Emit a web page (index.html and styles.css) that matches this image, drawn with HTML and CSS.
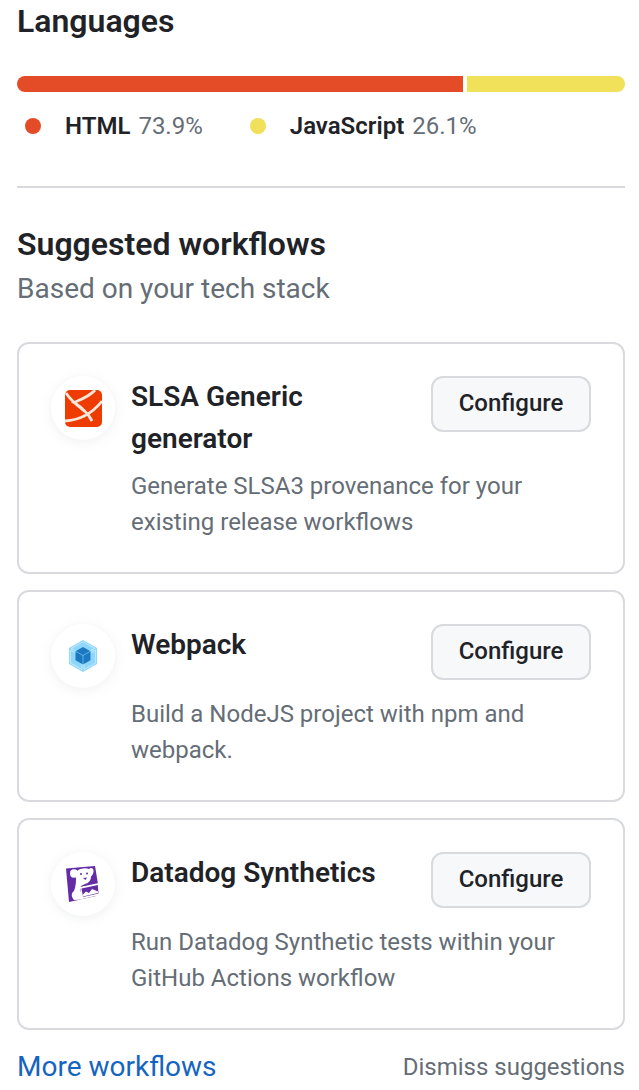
FILE: index.html
```html
<!DOCTYPE html>
<html lang="en">
<head>
<meta charset="utf-8">
<title>Languages</title>
<link rel="stylesheet" href="styles.css">
</head>
<body>
<main class="page">
  <h2 class="section-title">Languages</h2>
  <div class="lang-bar">
    <span class="lang-seg html"></span>
    <span class="lang-seg js"></span>
  </div>
  <ul class="legend">
    <li class="legend-item"><span class="dot html"></span><b class="lang-name">HTML</b><span class="lang-pct">73.9%</span></li>
    <li class="legend-item"><span class="dot js"></span><b class="lang-name">JavaScript</b><span class="lang-pct">26.1%</span></li>
  </ul>
  <hr class="divider">
  <h2 class="section-title">Suggested workflows</h2>
  <p class="subtitle">Based on your tech stack</p>

  <article class="card">
    <div class="logo">
      <svg width="37" height="37" viewBox="0 0 37 37">
        <rect width="37" height="37" rx="5" fill="#ee3c00"/>
        <path d="M1 3C6 11 13 16 20 21.500C23 24 25 27 27 31M30 0C25 6 17 9 9 12.500C13 15 16 17 20 21.500M0 31C14 30 27 24 37 11" fill="none" stroke="#fbe6da" stroke-width="2.800"/>
      </svg>
    </div>
    <div class="card-body">
      <div class="card-head">
        <h3 class="card-title">SLSA Generic generator</h3>
        <button class="btn">Configure</button>
      </div>
      <p class="card-desc">Generate SLSA3 provenance for your existing release workflows</p>
    </div>
  </article>

  <article class="card">
    <div class="logo">
      <svg width="28" height="32" viewBox="0 0 28 32">
        <path d="M14 0L28 8V24L14 32L0 24V8Z" fill="#8ed6fb"/>
        <path d="M14 1.800L25.800 8.400L14 15.200L2.200 8.400ZM1.400 10L13 16.600V29.600L1.400 23ZM26.600 10V23L15 29.600V16.600Z" fill="none" stroke="#d8f1fd" stroke-width=".7"/>
        <path d="M14 7L21.500 11.200V20.200L14 24.500L6.500 20.200V11.200Z" fill="#1c78c0"/>
        <path d="M6.500 11.200L14 15.500L21.500 11.200M14 15.500V24.500" fill="none" stroke="#8ed6fb" stroke-width=".6"/>
      </svg>
    </div>
    <div class="card-body">
      <div class="card-head">
        <h3 class="card-title">Webpack</h3>
        <button class="btn">Configure</button>
      </div>
      <p class="card-desc">Build a NodeJS project with npm and webpack.</p>
    </div>
  </article>

  <article class="card">
    <div class="logo">
      <svg width="34" height="36" viewBox="0 0 34 36">
        <path d="M0 2.500L29 0L32 18L30 30L3 36Z" fill="#632ca6"/>
        <ellipse cx="8" cy="7.500" rx="4" ry="4.200" fill="#fff"/>
        <path d="M11 5C14 2 20 1.500 23 3C25 1 27 2 27.500 4C28 7 26 10 25 10.500C25 14 23 17 19 18L15 20C14 23 14 25 15 26C17 27 18 31 16 33.500L8 34C5 31 5 27 8 25C10 20 10 15 10 11Z" fill="#fff"/>
        <path d="M14 21L33 17L34 29L16 33Z" fill="#fff"/>
        <path d="M15.500 22.500L31.800 19L32.500 27.500L17 31Z" fill="#632ca6"/>
        <path d="M16.500 29L20 25.500L23 27L26 23L32 25.500V27L17 30.500Z" fill="#fff"/>
        <circle cx="15" cy="8" r="1" fill="#632ca6"/>
        <circle cx="21" cy="7.500" r="1" fill="#632ca6"/>
        <path d="M17 12L21 11.500L19.500 14Z" fill="#632ca6"/>
      </svg>
    </div>
    <div class="card-body">
      <div class="card-head">
        <h3 class="card-title">Datadog Synthetics</h3>
        <button class="btn">Configure</button>
      </div>
      <p class="card-desc">Run Datadog Synthetic tests within your GitHub Actions workflow</p>
    </div>
  </article>

  <footer class="foot">
    <a class="more" href="#">More workflows</a>
    <span class="dismiss">Dismiss suggestions</span>
  </footer>
</main>
</body>
</html>
```
FILE: styles.css
```css
* { box-sizing: border-box; }
html, body { margin: 0; padding: 0; background: #fff; }
body { font-family: Roboto, "Liberation Sans", sans-serif; color: #1f2328; overflow: hidden; }
.page { padding: 0 14px 0 17px; }
.section-title { margin: 0; font-size: 32px; line-height: 42px; font-weight: 600; }
.lang-bar { display: flex; gap: 3.5px; height: 16px; margin-top: 34px; border-radius: 8px; overflow: hidden; }
.lang-seg { display: block; }
.lang-seg.html { width: 446px; background: #e34c26; }
.lang-seg.js { flex: 1; background: #f1e05a; }
.legend { display: flex; list-style: none; margin: 16px 0 0; padding: 0 0 0 8px; height: 36px; }
.legend-item { display: flex; align-items: center; font-size: 24px; margin-right: 47px; }
.dot { width: 16px; height: 16px; border-radius: 50%; margin-right: 24px; }
.dot.html { background: #e34c26; }
.dot.js { background: #f1e05a; }
.lang-name { font-weight: 600; margin-right: 8px; }
.lang-pct { color: #656d76; }
.divider { border: 0; height: 2px; background: #d8dadd; margin: 42px 0 0; }
.divider + .section-title { margin-top: 35px; }
.subtitle { margin: 3px 0 0; font-size: 28px; line-height: 42px; color: #656d76; }
.card { display: flex; border: 2px solid #d8dadd; border-radius: 12px; padding: 32px; margin-bottom: 16px; }
.subtitle + .card { margin-top: 32px; }
.logo { flex: none; width: 64px; height: 64px; border-radius: 50%; background: #fff; box-shadow: 0 2px 12px rgba(140, 149, 159, .14); display: flex; align-items: center; justify-content: center; margin-right: 16px; }
.card-body { flex: 1; min-width: 0; }
.card-head { display: flex; justify-content: space-between; align-items: flex-start; }
.card-title { margin: 0 0 8px; font-size: 28px; line-height: 42px; font-weight: 600; max-width: 260px; }
.btn { flex: none; width: 160px; height: 56px; margin-bottom: 16px; border: 2px solid #d8dadd; border-radius: 12px; background: #f6f8fa; color: #1f2328; font: 500 24px/1 Roboto, sans-serif; padding: 0 0 2px; }
.card-desc { margin: 0; font-size: 24px; line-height: 36px; color: #656d76; }
.foot { display: flex; justify-content: space-between; align-items: center; margin-top: 16px; }
.more { color: #1565c0; font-size: 28px; line-height: 42px; text-decoration: none; }
.dismiss { color: #656d76; font-size: 24px; }
```
